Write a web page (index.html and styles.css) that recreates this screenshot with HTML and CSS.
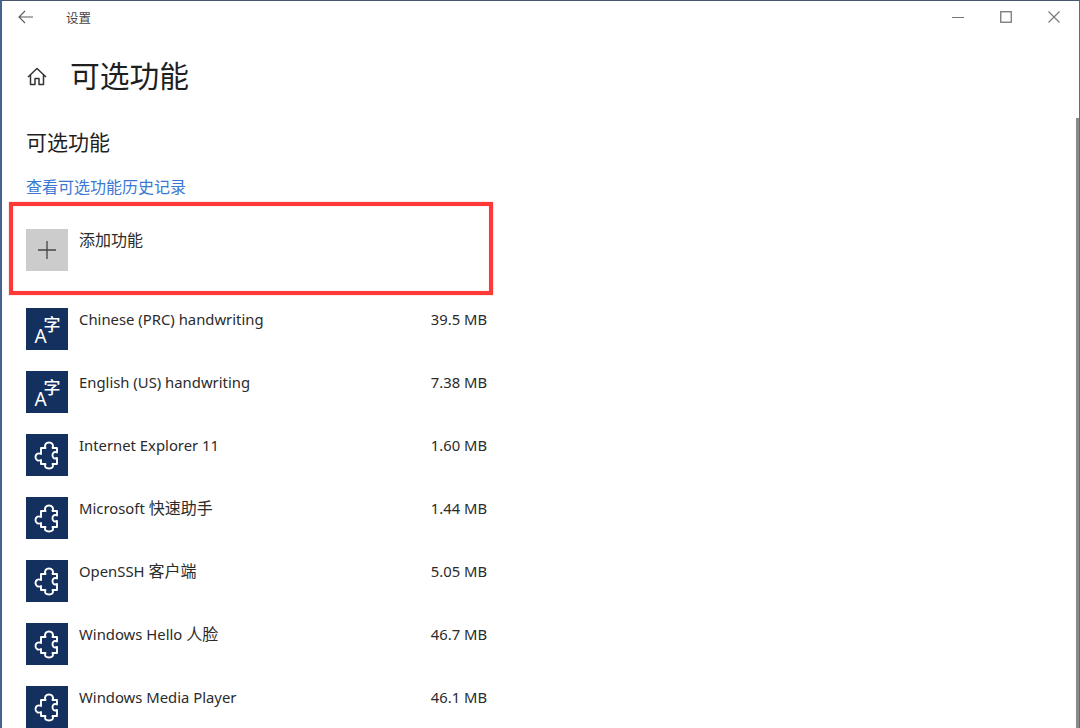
FILE: index.html
```html
<!DOCTYPE html>
<html lang="zh-CN">
<head>
<meta charset="utf-8">
<title>设置</title>
<link rel="stylesheet" href="styles.css">
</head>
<body>
<svg class="defs" width="0" height="0" aria-hidden="true">
  <defs>
    <symbol id="puzzle" viewBox="0 0 42 42">
      <path d="M15 14H19.500c-1.500-3 .5-5.500 3.500-5.500s5 2.500 3.500 5.500H31V18.500c-3-1.500-4.500.5-4.500 2.700s1.500 4.300 4.500 2.700V30H26.500c1.500 3-.5 4.500-3.500 4.500s-5-1.500-3.500-4.500H15V26c-3 1.500-5.500 0-5.500-3s2.500-4.500 5.500-3z" fill="none" stroke="#fff" stroke-width="1.900" stroke-linejoin="round"/>
    </symbol>
    <symbol id="lang" viewBox="0 0 42 42">
      <text class="lang-a" x="8.500" y="35">A</text>
      <text class="lang-zi" x="17.500" y="23">字</text>
    </symbol>
  </defs>
</svg>
<div class="window">
  <header class="titlebar">
    <div class="title-left">
      <svg class="back" width="16" height="14" viewBox="0 0 16 14"><path d="M7 1L1 7l6 6M1 7h14" fill="none" stroke="#5a5a5a" stroke-width="1.100"/></svg>
      <span class="app-name">设置</span>
    </div>
    <div class="controls">
      <svg width="12" height="12" viewBox="0 0 12 12"><path d="M0 6.500h12" stroke="#777" stroke-width="1"/></svg>
      <svg width="12" height="12" viewBox="0 0 12 12"><rect x=".75" y=".75" width="10.500" height="10.500" fill="none" stroke="#777" stroke-width="1.300"/></svg>
      <svg width="12" height="12" viewBox="0 0 12 12"><path d="M.5.500l11 11M11.500.500l-11 11" stroke="#777" stroke-width="1.100"/></svg>
    </div>
  </header>
  <main class="content">
    <div class="page-head">
      <svg class="home" width="20" height="19" viewBox="0 0 20 19"><path d="M1 10L10 1.500 19 10M3.500 8v9.500h4.500v-6h4v6h4.500V8" fill="none" stroke="#333" stroke-width="1.500" stroke-linejoin="round"/></svg>
      <h1>可选功能</h1>
    </div>
    <h2>可选功能</h2>
    <a class="history" href="#">查看可选功能历史记录</a>
    <ul class="list">
      <li class="row add">
        <span class="tile tile-add"><svg width="18" height="18" viewBox="0 0 18 18"><path d="M9 0v18M0 9h18" stroke="#444" stroke-width="1.300"/></svg></span>
        <span class="name">添加功能</span>
      </li>
      <li class="row"><svg class="tile"><use href="#lang"/></svg><span class="name latin">Chinese (PRC) handwriting</span><span class="size">39.5 MB</span></li>
      <li class="row"><svg class="tile"><use href="#lang"/></svg><span class="name latin">English (US) handwriting</span><span class="size">7.38 MB</span></li>
      <li class="row"><svg class="tile"><use href="#puzzle"/></svg><span class="name latin">Internet Explorer 11</span><span class="size">1.60 MB</span></li>
      <li class="row"><svg class="tile"><use href="#puzzle"/></svg><span class="name latin">Microsoft <span class="cjk">快速助手</span></span><span class="size">1.44 MB</span></li>
      <li class="row"><svg class="tile"><use href="#puzzle"/></svg><span class="name latin">OpenSSH <span class="cjk">客户端</span></span><span class="size">5.05 MB</span></li>
      <li class="row"><svg class="tile"><use href="#puzzle"/></svg><span class="name latin">Windows Hello <span class="cjk">人脸</span></span><span class="size">46.7 MB</span></li>
      <li class="row"><svg class="tile"><use href="#puzzle"/></svg><span class="name latin">Windows Media Player</span><span class="size">46.1 MB</span></li>
    </ul>
  </main>
  <div class="scrollbar"></div>
  <div class="highlight"></div>
</div>
</body>
</html>
```
FILE: styles.css
```css
* { box-sizing: border-box; }
html, body { margin: 0; padding: 0; height: 100%; overflow: hidden; background: #fff; }
body {
  font-family: "Noto Sans", "Noto Sans CJK SC", sans-serif;
  color: #262626;
}
.defs { position: absolute; }
.window {
  position: relative;
  width: 1080px;
  height: 728px;
  overflow: hidden;
  border-top: 1px solid #46566e;
  border-left: 2px solid #46648f;
  border-right: 1px solid #5c6c84;
  background: #fff;
}
.titlebar {
  height: 32px;
  display: flex;
  justify-content: space-between;
  align-items: center;
}
.title-left { display: flex; align-items: center; padding-left: 16px; }
.back { margin-right: 32px; }
.app-name { font-size: 12.500px; color: #444; }
.controls { display: flex; align-items: center; gap: 36px; padding-right: 19px; }
.content { padding-left: 24px; }
.page-head { display: flex; align-items: center; height: 40px; margin-top: 23px; }
.home { margin-left: 1px; margin-right: 23px; }
h1 { margin: 0; font-size: 29.750px; font-weight: 400; line-height: 40px; color: #1f1f1f; }
h2 { margin: 31px 0 0; font-size: 21px; font-weight: 400; line-height: 30px; color: #1f1f1f; }
.history {
  display: block;
  margin-top: 18px;
  font-size: 16px;
  line-height: 24px;
  color: #3a78d4;
  text-decoration: none;
}
.list { list-style: none; margin: 0; padding: 0; width: 461px; }
.row { display: flex; align-items: flex-start; height: 63px; }
.add { margin-top: 30px; height: 79px; }
.tile { width: 42px; height: 42px; flex: none; background: #14305f; display: block; }
.tile-add { background: #cccccc; display: flex; align-items: center; justify-content: center; }
.name { margin-left: 11px; flex: 1; font-size: 16px; line-height: 24px; margin-top: -1px; color: #2b2b2b; }
.latin { font-size: 14.850px; }
.cjk { font-size: 16px; }
.size { font-size: 14.800px; line-height: 24px; margin-top: -1px; color: #2b2b2b; }
.lang-a { font-size: 19px; fill: #fff; }
.lang-zi { font-size: 17px; fill: #fff; font-weight: 500; }
.scrollbar {
  position: absolute;
  right: 0;
  top: 117px;
  width: 3px;
  height: 611px;
  background: #8a8a8a;
}
.highlight {
  position: absolute;
  left: 7px;
  top: 201px;
  width: 484px;
  height: 93px;
  border: 4px solid #ff3838;
  box-shadow: 0 0 1px rgba(255, 56, 56, 0.6), inset 0 0 1px rgba(255, 56, 56, 0.6);
}
```
